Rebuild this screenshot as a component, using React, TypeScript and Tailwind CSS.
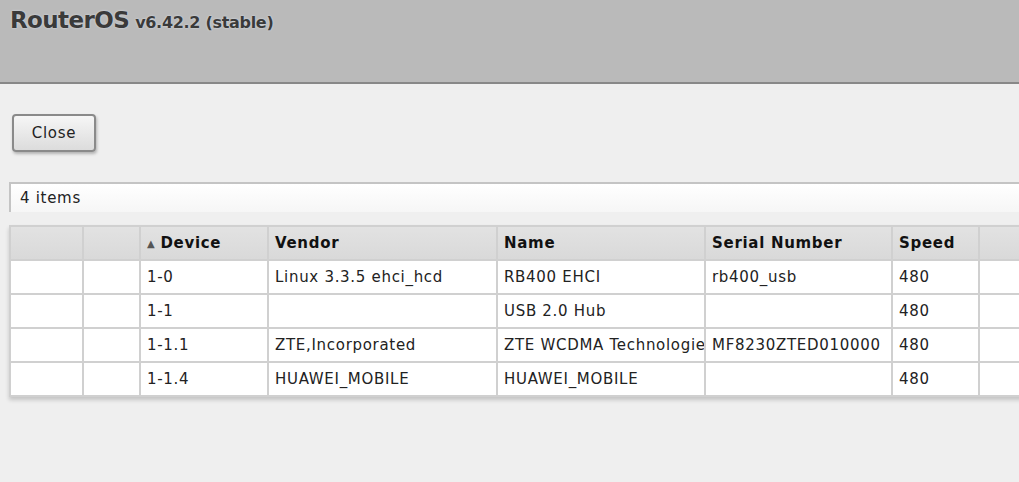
import React from "react";

interface UsbDevice {
  device: string;
  vendor: string;
  name: string;
  serial: string;
  speed: string;
}

const devices: UsbDevice[] = [
  { device: "1-0", vendor: "Linux 3.3.5 ehci_hcd", name: "RB400 EHCI", serial: "rb400_usb", speed: "480" },
  { device: "1-1", vendor: "", name: "USB 2.0 Hub", serial: "", speed: "480" },
  { device: "1-1.1", vendor: "ZTE,Incorporated", name: "ZTE WCDMA Technologies MSM", serial: "MF8230ZTED010000", speed: "480" },
  { device: "1-1.4", vendor: "HUAWEI_MOBILE", name: "HUAWEI_MOBILE", serial: "", speed: "480" },
];

// widths include the right border of each cell
const colWidths = ["w-[73px]", "w-[57px]", "w-[128px]", "w-[229px]", "w-[208px]", "w-[187px]", "w-[87px]", "w-[200px]"];

const Cell: React.FC<{ w: string; children?: React.ReactNode; head?: boolean }> = ({ w, children, head }) => (
  <div
    className={`${w} shrink-0 h-full border-r-2 border-[#d0d0d0] pl-[6px] flex items-center overflow-hidden whitespace-nowrap ${
      head ? "font-bold text-[#111]" : "text-[#222]"
    }`}
  >
    {children}
  </div>
);

export default function App() {
  return (
    <div className="w-[1019px] h-[482px] overflow-hidden bg-[#efefef] font-['DejaVu_Sans',Verdana,sans-serif] text-[15px] tracking-[0.7px]">
      {/* Title bar */}
      <div className="h-[84px] bg-[#bababa] border-b-2 border-[#888] pl-[10px] pt-[3px] tracking-normal">
        <span className="text-[23px] font-bold text-[#3a3a3a] tracking-[-0.6px] [text-shadow:0_0_2px_#dde6f0]">
          RouterOS
        </span>
        <span className="ml-[6px] text-[16px] font-bold text-[#3a3a3a] tracking-[-0.3px] [text-shadow:0_0_2px_#dde6f0]">
          v6.42.2 (stable)
        </span>
      </div>

      {/* Toolbar */}
      <div className="pt-[30px] pl-[12px]">
        <button className="w-[84px] h-[38px] rounded-[4px] border-2 border-[#8a8a8a] bg-gradient-to-b from-[#f6f6f6] to-[#dcdcdc] text-[#222] shadow-[1px_2px_3px_rgba(0,0,0,0.25)]">
          Close
        </button>
      </div>

      {/* Item count */}
      <div className="mt-[30px] ml-[9px] h-[30px] border-t-2 border-l-2 border-[#c4c4c4] bg-gradient-to-b from-white to-[#f6f6f6] flex items-center pl-[9px] text-[#222]">
        4 items
      </div>

      {/* Table */}
      <div className="mt-[13px] ml-[9px] w-[1180px] border-l-2 border-t-2 border-[#d0d0d0] shadow-[0_3px_4px_rgba(0,0,0,0.18)]">
        <div className="flex h-[34px] border-b-2 border-[#d0d0d0] bg-gradient-to-b from-[#e2e2e2] to-[#d9d9d9]">
          <Cell w={colWidths[0]} head />
          <Cell w={colWidths[1]} head />
          <Cell w={colWidths[2]} head>
            <span className="text-[10px] text-[#555] mr-[5px]">▲</span>
            Device
          </Cell>
          <Cell w={colWidths[3]} head>Vendor</Cell>
          <Cell w={colWidths[4]} head>Name</Cell>
          <Cell w={colWidths[5]} head>Serial Number</Cell>
          <Cell w={colWidths[6]} head>Speed</Cell>
          <Cell w={colWidths[7]} head />
        </div>
        {devices.map((d) => (
          <div key={d.device} className="flex h-[34px] border-b-2 border-[#d0d0d0] bg-white">
            <Cell w={colWidths[0]} />
            <Cell w={colWidths[1]} />
            <Cell w={colWidths[2]}>{d.device}</Cell>
            <Cell w={colWidths[3]}>{d.vendor}</Cell>
            <Cell w={colWidths[4]}>{d.name}</Cell>
            <Cell w={colWidths[5]}>{d.serial}</Cell>
            <Cell w={colWidths[6]}>{d.speed}</Cell>
            <Cell w={colWidths[7]} />
          </div>
        ))}
      </div>
    </div>
  );
}
